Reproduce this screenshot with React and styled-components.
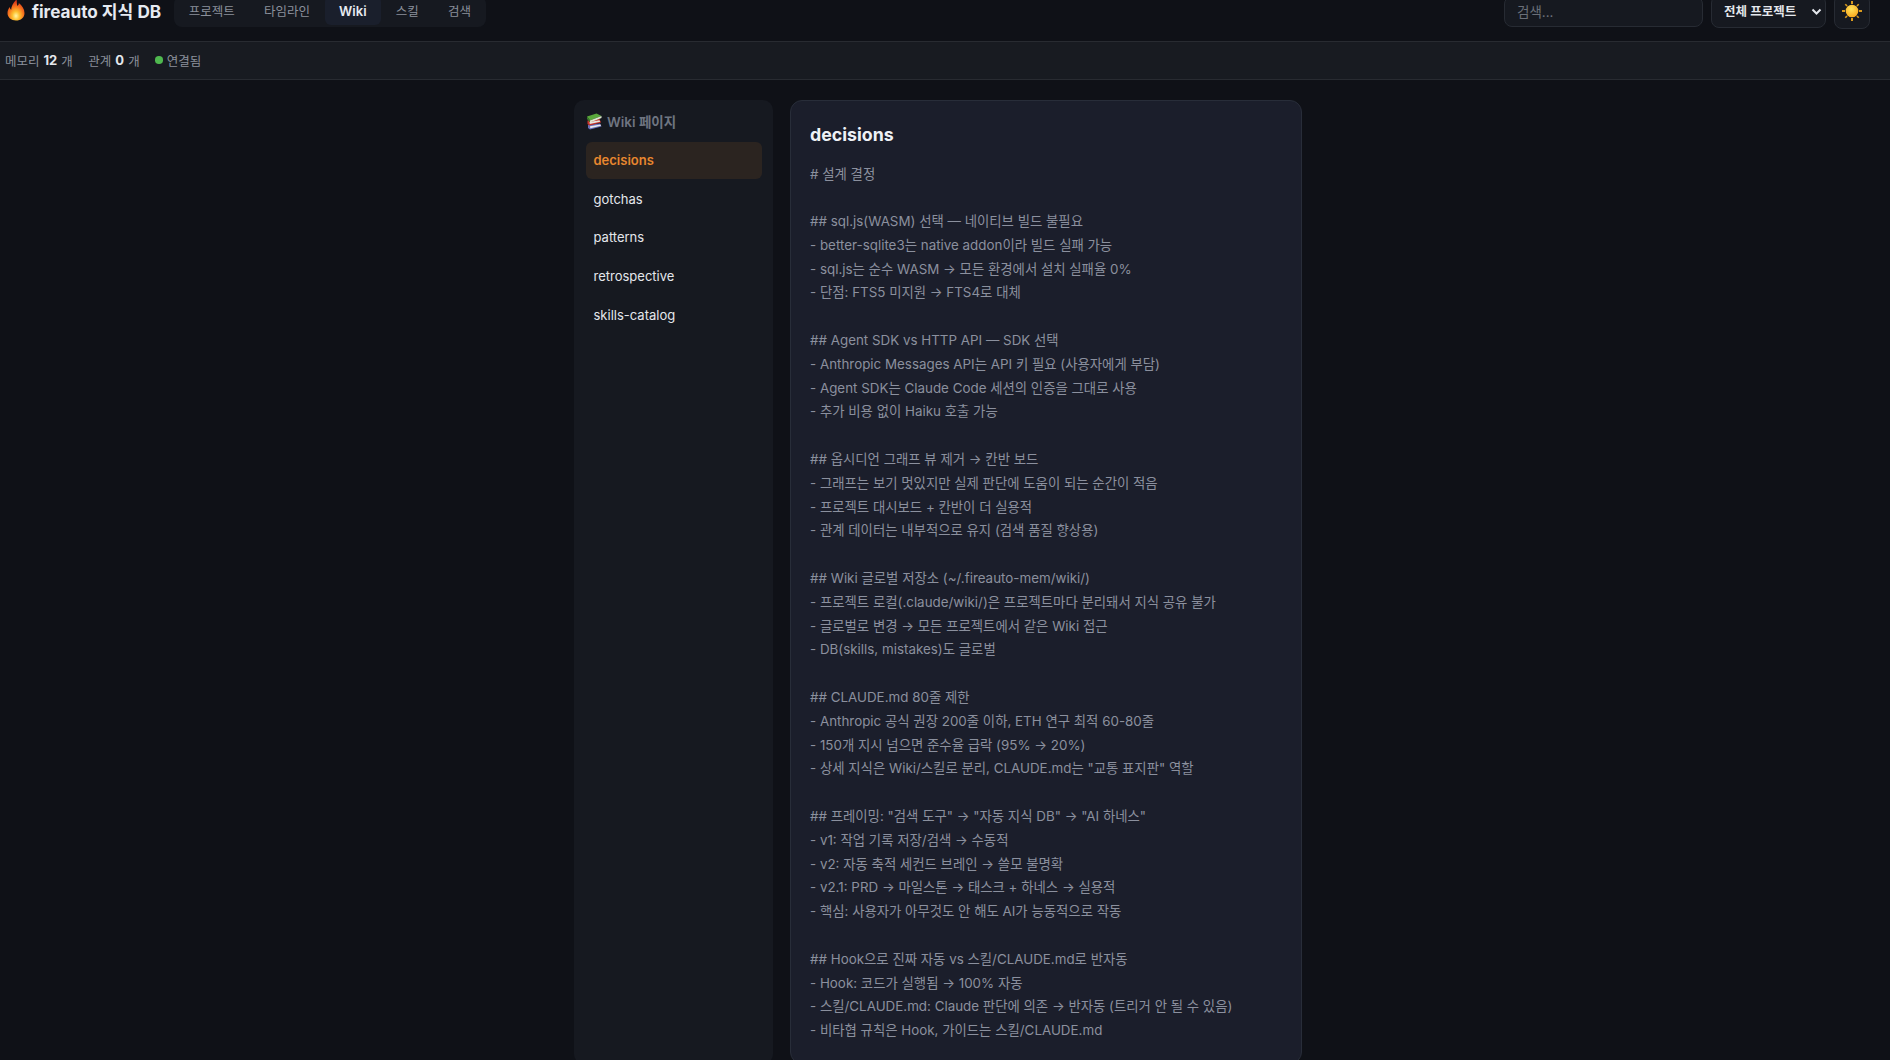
import React from "react"
import styled, { createGlobalStyle } from "styled-components"

const GlobalStyle = createGlobalStyle`
  html, body {
    margin: 0;
    padding: 0;
    height: 100%;
    overflow: hidden;
    background: #0f1117;
  }
  body {
    font-family: Inter, "Noto Sans CJK KR", sans-serif;
    color: #e4e7ec;
  }
  * {
    box-sizing: border-box;
  }
`

const Header = styled.header`
  display: flex;
  align-items: center;
  justify-content: space-between;
  height: 51px;
  margin-top: -10px;
  padding: 0 20px 9px 6px;
`

const HeaderLeft = styled.div`
  display: flex;
  align-items: center;
  gap: 12.5px;
`

const HeaderRight = styled.div`
  display: flex;
  align-items: center;
  gap: 8px;
`

const Logo = styled.div`
  display: flex;
  align-items: center;
  gap: 6px;
  margin-top: -2px;
  font-size: 17.15px;
  font-weight: 700;
  color: #e6eaf1;
`

const Nav = styled.nav`
  display: flex;
  gap: 1.2px;
  height: 31px;
  padding: 0 1px 1.500px;
  background: #161920;
  border-radius: 8px;
`

const Tab = styled.a`
  display: flex;
  align-items: center;
  padding: 1px 14px 0;
  border-radius: 6px;
  font-size: ${(p) => (p.$active ? "13px" : "12.5px")};
  font-weight: ${(p) => (p.$active ? 600 : 400)};
  color: ${(p) => (p.$active ? "#e6eaf1" : "#8b909b")};
  background: ${(p) => (p.$active ? "#1a1f2c" : "transparent")};
`

const SearchInput = styled.input`
  width: 199px;
  height: 31px;
  padding: 1px 12px 0;
  background: #161920;
  border: 1px solid #272b33;
  border-radius: 8px;
  font-family: inherit;
  font-size: 13.5px;
  color: #e4e7ec;
  outline: none;

  &::placeholder {
    color: #6a6f78;
  }
`

const SelectWrap = styled.div`
  position: relative;
  width: 115px;
  height: 33px;
`

const Select = styled.select`
  appearance: none;
  width: 100%;
  height: 100%;
  padding: 1px 12px 0;
  background: #161920;
  border: 1px solid #272b33;
  border-radius: 8px;
  font-family: inherit;
  font-size: 12.5px;
  font-weight: 600;
  color: #e4e7ec;
`

const Chevron = styled.svg`
  position: absolute;
  right: 4px;
  top: 13px;
  width: 11px;
  height: 8px;
  pointer-events: none;
`

const ThemeButton = styled.button`
  display: flex;
  align-items: center;
  justify-content: center;
  width: 36px;
  height: 35px;
  padding: 0;
  background: #161920;
  border: 1px solid #272b33;
  border-radius: 8px;
`

const StatusBar = styled.div`
  display: flex;
  align-items: center;
  gap: 15.5px;
  height: 39px;
  padding: 0 5px 1px;
  background: #181b21;
  border-top: 1px solid #282b31;
  border-bottom: 1px solid #282b31;
  font-size: 12.5px;
  color: #8b909b;
`

const Stat = styled.span`
  display: flex;
  align-items: center;
  gap: 4px;

  & b {
    font-weight: 700;
    font-size: 13px;
    color: #e4e7ec;
  }
`

const Dot = styled.i`
  width: 7.5px;
  height: 7.5px;
  border-radius: 50%;
  background: #4fb84f;
`

const Main = styled.main`
  display: flex;
  justify-content: center;
  gap: 17px;
  padding: 20px 14px 0 0;
`

const Sidebar = styled.aside`
  width: 199px;
  padding: 10px 11px 12px 12px;
  background: #161920;
  border-radius: 10px;
`

const SidebarTitle = styled.h3`
  display: flex;
  align-items: center;
  gap: 4px;
  height: 22px;
  margin: 0 0 10px;
  font-size: 13.5px;
  font-weight: 600;
  color: #6f7581;
`

const PageList = styled.ul`
  display: flex;
  flex-direction: column;
  gap: 1.7px;
  margin: 0;
  padding: 0;
  list-style: none;
`

const PageItem = styled.li`
  display: flex;
  align-items: center;
  height: 37px;
  padding: 0 7.5px 1px;
  border-radius: 6px;
  font-size: 13px;
  font-weight: ${(p) => (p.$active ? 600 : 400)};
  color: ${(p) => (p.$active ? "#e8872f" : "#e4e7ec")};
  background: ${(p) => (p.$active ? "#2b2420" : "transparent")};
`

const Content = styled.article`
  width: 512px;
  padding: 19px 20px 20px 19px;
  background: #1b1e2b;
  border: 1px solid #282d39;
  border-radius: 12px;
`

const PageTitle = styled.h2`
  margin: 0 0 12.5px;
  font-size: 17.8px;
  line-height: 30px;
  font-weight: 700;
  color: #eef1f6;
`

const Body = styled.pre`
  margin: 0;
  font-family: inherit;
  font-size: 13.38px;
  line-height: 23.8px;
  color: #8b909e;
  white-space: pre-wrap;
`

const FlameIcon = () => (
  <svg width="20" height="22" viewBox="0 0 20 22">
    <defs>
      <radialGradient id="flameFill" cx="50%" cy="78%" r="70%">
        <stop offset="0" stopColor="#fff6a8" />
        <stop offset="0.3" stopColor="#fdc02f" />
        <stop offset="0.65" stopColor="#f4701d" />
        <stop offset="1" stopColor="#d5341b" />
      </radialGradient>
    </defs>
    <path
      d="M10.500 .5c.8 3-.2 4.500 1.100 6.400.8-.5 1.200-1.500 1.200-2.800 3.200 2.500 5.700 6 5.700 9.800 0 4.800-3.700 7.600-8.500 7.600s-8.500-2.800-8.500-7.400c0-2.500 1-4.500 2.300-6 .2 1.300.6 2.100 1.400 2.800C5 7.900 7.300 3.500 10.500 .5z"
      fill="url(#flameFill)"
    />
  </svg>
)

const BooksIcon = () => (
  <svg width="17" height="17" viewBox="0 0 17 17">
    <path d="M2 12 14 10.500 15.500 13.500 4 16.500 2 15z" fill="#6a70b8" />
    <path d="M4 13.300 14.500 11.500 15 12.800 4.300 15.300z" fill="#e8e8ee" />
    <path d="M1.500 7.500 13.500 6 15 9.500 3.500 12.500 1.500 11z" fill="#c8322c" />
    <path d="M3.500 9 13.500 7.300 14.200 8.800 3.800 11z" fill="#e8e4dc" />
    <path d="M1 3.500 10.500 .5 15.500 3 4 7.500z" fill="#5aa83c" />
    <path d="M1 3.500 4 7.500 4 9.500 1 6z" fill="#3b7d2a" />
    <path d="M4 7.500 15.500 3 15.500 5 4 9.500z" fill="#dfe6cf" />
  </svg>
)

const SunIcon = () => (
  <svg width="20" height="20" viewBox="0 0 20 20">
    <defs>
      <radialGradient id="sunFill" cx="45%" cy="35%" r="70%">
        <stop offset="0" stopColor="#ffe45c" />
        <stop offset="1" stopColor="#f9a51a" />
      </radialGradient>
    </defs>
    <g fill="#d99a1e">
      <rect x="9" y="0" width="2" height="3" />
      <rect x="9" y="17" width="2" height="3" />
      <rect x="0" y="9" width="3" height="2" />
      <rect x="17" y="9" width="3" height="2" />
      <rect x="9.200" y="0.500" width="1.600" height="2.500" transform="rotate(45 10 10)" />
      <rect x="9.200" y="0.500" width="1.600" height="2.500" transform="rotate(135 10 10)" />
      <rect x="9.200" y="0.500" width="1.600" height="2.500" transform="rotate(225 10 10)" />
      <rect x="9.200" y="0.500" width="1.600" height="2.500" transform="rotate(315 10 10)" />
    </g>
    <circle cx="10" cy="10" r="6.300" fill="url(#sunFill)" />
  </svg>
)

const tabs = ["프로젝트", "타임라인", "Wiki", "스킬", "검색"]
const pages = ["decisions", "gotchas", "patterns", "retrospective", "skills-catalog"]

const wikiText = `# 설계 결정

## sql.js(WASM) 선택 — 네이티브 빌드 불필요
- better-sqlite3는 native addon이라 빌드 실패 가능
- sql.js는 순수 WASM → 모든 환경에서 설치 실패율 0%
- 단점: FTS5 미지원 → FTS4로 대체

## Agent SDK vs HTTP API — SDK 선택
- Anthropic Messages API는 API 키 필요 (사용자에게 부담)
- Agent SDK는 Claude Code 세션의 인증을 그대로 사용
- 추가 비용 없이 Haiku 호출 가능

## 옵시디언 그래프 뷰 제거 → 칸반 보드
- 그래프는 보기 멋있지만 실제 판단에 도움이 되는 순간이 적음
- 프로젝트 대시보드 + 칸반이 더 실용적
- 관계 데이터는 내부적으로 유지 (검색 품질 향상용)

## Wiki 글로벌 저장소 (~/.fireauto-mem/wiki/)
- 프로젝트 로컬(.claude/wiki/)은 프로젝트마다 분리돼서 지식 공유 불가
- 글로벌로 변경 → 모든 프로젝트에서 같은 Wiki 접근
- DB(skills, mistakes)도 글로벌

## CLAUDE.md 80줄 제한
- Anthropic 공식 권장 200줄 이하, ETH 연구 최적 60-80줄
- 150개 지시 넘으면 준수율 급락 (95% → 20%)
- 상세 지식은 Wiki/스킬로 분리, CLAUDE.md는 "교통 표지판" 역할

## 프레이밍: "검색 도구" → "자동 지식 DB" → "AI 하네스"
- v1: 작업 기록 저장/검색 → 수동적
- v2: 자동 축적 세컨드 브레인 → 쓸모 불명확
- v2.1: PRD → 마일스톤 → 태스크 + 하네스 → 실용적
- 핵심: 사용자가 아무것도 안 해도 AI가 능동적으로 작동

## Hook으로 진짜 자동 vs 스킬/CLAUDE.md로 반자동
- Hook: 코드가 실행됨 → 100% 자동
- 스킬/CLAUDE.md: Claude 판단에 의존 → 반자동 (트리거 안 될 수 있음)
- 비타협 규칙은 Hook, 가이드는 스킬/CLAUDE.md`

const App = () => {
  return (
    <>
      <GlobalStyle />
      <Header>
        <HeaderLeft>
          <Logo>
            <FlameIcon />
            fireauto 지식 DB
          </Logo>
          <Nav>
            {tabs.map((t) => (
              <Tab key={t} $active={t === "Wiki"}>{t}</Tab>
            ))}
          </Nav>
        </HeaderLeft>
        <HeaderRight>
          <SearchInput placeholder="검색..." />
          <SelectWrap>
            <Select defaultValue="all">
              <option value="all">전체 프로젝트</option>
            </Select>
            <Chevron viewBox="0 0 11 8">
              <path d="M1.500 1.500 5.500 5.500 9.500 1.500" fill="none" stroke="#e4e7ec" strokeWidth="2" />
            </Chevron>
          </SelectWrap>
          <ThemeButton>
            <SunIcon />
          </ThemeButton>
        </HeaderRight>
      </Header>
      <StatusBar>
        <Stat>메모리 <b>12</b> 개</Stat>
        <Stat>관계 <b>0</b> 개</Stat>
        <Stat><Dot />연결됨</Stat>
      </StatusBar>
      <Main>
        <Sidebar>
          <SidebarTitle>
            <BooksIcon />
            Wiki 페이지
          </SidebarTitle>
          <PageList>
            {pages.map((p) => (
              <PageItem key={p} $active={p === "decisions"}>{p}</PageItem>
            ))}
          </PageList>
        </Sidebar>
        <Content>
          <PageTitle>decisions</PageTitle>
          <Body>{wikiText}</Body>
        </Content>
      </Main>
    </>
  )
}

export default App
